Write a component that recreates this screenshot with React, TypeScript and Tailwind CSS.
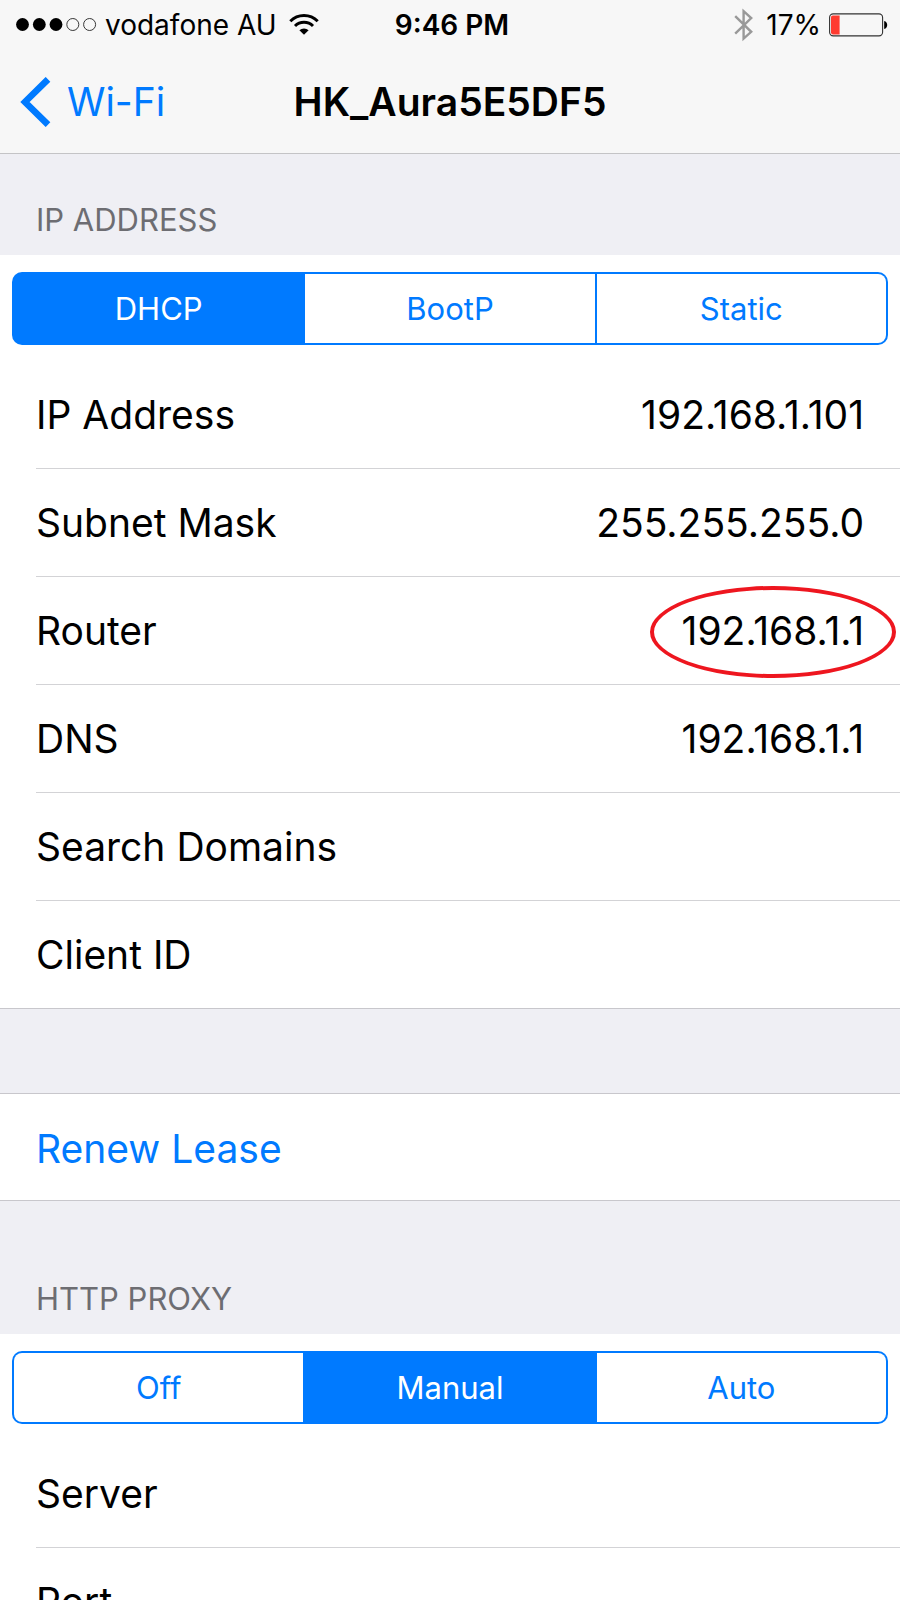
import { useState } from "react";

type SegmentedProps = {
  label: string;
  options: string[];
  value: string;
  onChange: (value: string) => void;
};

type RowProps = {
  label: string;
  value: string;
  circled?: boolean;
};

const LEASE: RowProps[] = [
  { label: "IP Address", value: "192.168.1.101" },
  { label: "Subnet Mask", value: "255.255.255.0" },
  { label: "Router", value: "192.168.1.1", circled: true },
  { label: "DNS", value: "192.168.1.1" },
];

// ── Icons ────────────────────────────────────────────────────────────────
function SignalDots() {
  return (
    <svg width="81" height="14" viewBox="0 0 81 14" aria-label="Signal 3 of 5">
      <circle cx="6.5" cy="6.5" r="6.4" />
      <circle cx="23.3" cy="6.5" r="6.4" />
      <circle cx="40" cy="6.5" r="6.4" />
      <circle cx="56.8" cy="6.5" r="6" fill="none" stroke="#222" strokeWidth="0.9" />
      <circle cx="73.6" cy="6.5" r="6" fill="none" stroke="#222" strokeWidth="0.9" />
    </svg>
  );
}

function WifiIcon() {
  return (
    <svg width="30" height="22" viewBox="0 0 30 22" fill="none" stroke="#000" strokeWidth="3" aria-label="Wi-Fi">
      <path d="M1.3 7.2 A19.4 19.4 0 0 1 28.7 7.2" />
      <path d="M6 12 A12.8 12.8 0 0 1 24 12" />
      <path d="M10.4 16.2 A6.8 6.8 0 0 1 19.6 16.2 L15 20.8 Z" fill="#000" stroke="none" />
    </svg>
  );
}

function BluetoothIcon() {
  return (
    <svg width="20" height="34" viewBox="0 0 20 34" fill="none" stroke="#999" strokeWidth="2.4" aria-label="Bluetooth">
      <path d="M1.2 8.2 L17.2 23.8 L9.6 30.6 V3.2 L17.2 10 L1.2 25.6" />
    </svg>
  );
}

function BatteryIcon() {
  return (
    <svg width="59" height="24" viewBox="0 0 59 24" aria-label="Battery">
      <rect x="0.6" y="0.9" width="53" height="22" rx="3.6" fill="none" stroke="#333" strokeWidth="1.1" />
      <path d="M3.8 2.4 H10.6 V21.4 H3.8 A1.8 1.8 0 0 1 2 19.6 V4.2 A1.8 1.8 0 0 1 3.8 2.4 Z" fill="#ff3b30" />
      <path d="M55.2 8 C59.2 9 59.2 15 55.2 16 Z" />
    </svg>
  );
}

function BackChevron() {
  return (
    <svg width="31" height="50" viewBox="0 0 31 50" fill="none" stroke="#007aff" strokeWidth="6.6">
      <path d="M28 2.3 L5 25 L28 47.7" />
    </svg>
  );
}

// ── Building blocks ──────────────────────────────────────────────────────
function Segmented({ label, options, value, onChange }: SegmentedProps) {
  return (
    <div className="px-3 pt-[17px] pb-4">
      <div
        role="group"
        aria-label={label}
        className="grid h-[73px] grid-cols-3 gap-[2px] rounded-[10px] bg-[#007aff] p-[2px]"
      >
        {options.map((option) => (
          <button
            key={option}
            type="button"
            aria-pressed={option === value}
            onClick={() => onChange(option)}
            className={`text-[31px] leading-10 first:rounded-l-lg last:rounded-r-lg ${
              option === value ? "bg-[#007aff] text-white" : "bg-white text-[#007aff]"
            }`}
          >
            {option}
          </button>
        ))}
      </div>
    </div>
  );
}

function ValueRow({ label, value, circled }: RowProps) {
  return (
    <div className="relative pl-9">
      <div className="flex h-[108px] items-center justify-between border-b border-[#d3d3d6] pr-9">
        <dt>{label}</dt>
        <dd>{value}</dd>
      </div>
      {circled && (
        <span className="absolute top-[9px] right-1 h-[92px] w-[246px] rounded-[50%] border-4 border-[#ee161f]" />
      )}
    </div>
  );
}

function FieldRow({ id, label, last }: { id: string; label: string; last?: boolean }) {
  return (
    <div className={last ? "border-b border-[#c8c7cc] pl-9" : "pl-9"}>
      <div
        className={`flex items-center gap-6 pr-9 ${
          last ? "h-[107px]" : "h-[108px] border-b border-[#d3d3d6]"
        }`}
      >
        <label htmlFor={id} className="shrink-0">
          {label}
        </label>
        <input id={id} type="text" className="min-w-0 flex-1 bg-transparent text-right outline-none" />
      </div>
    </div>
  );
}

function SectionTitle({ children }: { children: string }) {
  return <h2 className="px-9 pb-[15px] text-[31px] leading-10 text-[#6d6d72]">{children}</h2>;
}

export default function App() {
  const [ipMode, setIpMode] = useState("DHCP");
  const [proxyMode, setProxyMode] = useState("Manual");

  return (
    <div className="flex h-screen flex-col overflow-hidden bg-[#efeff4] font-['Inter','Liberation_Sans',sans-serif] text-black">
      <header className="shrink-0 border-b border-[#c4c4c6] bg-[#f7f7f7]">
        <div className="grid h-[50px] grid-cols-[1fr_auto_1fr] items-center pr-3 pl-4 text-[28px] leading-9">
          <div className="flex items-center gap-2">
            <SignalDots />
            <span>vodafone AU</span>
            <span className="pl-1">
              <WifiIcon />
            </span>
          </div>
          <span className="font-semibold">9:46 PM</span>
          <div className="flex items-center justify-end gap-2">
            <span className="pr-1">
              <BluetoothIcon />
            </span>
            <span>17%</span>
            <BatteryIcon />
          </div>
        </div>
        <div className="grid h-[103px] grid-cols-[1fr_auto_1fr] items-center px-5 text-[39px] leading-12">
          <button type="button" className="flex items-center gap-4 text-[#007aff]">
            <BackChevron />
            Wi-Fi
          </button>
          <h1 className="font-semibold">HK_Aura5E5DF5</h1>
        </div>
      </header>

      <main className="min-h-0 flex-1 overflow-y-auto text-[39px] leading-12 [scrollbar-width:none]">
        <section>
          <div className="pt-[46px]">
            <SectionTitle>IP ADDRESS</SectionTitle>
          </div>
          <div className="bg-white">
            <Segmented
              label="IP address mode"
              options={["DHCP", "BootP", "Static"]}
              value={ipMode}
              onChange={setIpMode}
            />
            <dl>
              {LEASE.map((row) => (
                <ValueRow key={row.label} {...row} />
              ))}
            </dl>
            <FieldRow id="search-domains" label="Search Domains" />
            <FieldRow id="client-id" label="Client ID" last />
          </div>
        </section>

        <section className="pt-[84px]">
          <button
            type="button"
            className="block h-[108px] w-full border-y border-[#c8c7cc] bg-white px-9 pt-1 text-left text-[#007aff]"
          >
            Renew Lease
          </button>
        </section>

        <section>
          <div className="pt-[78px]">
            <SectionTitle>HTTP PROXY</SectionTitle>
          </div>
          <div className="bg-white">
            <Segmented
              label="HTTP proxy mode"
              options={["Off", "Manual", "Auto"]}
              value={proxyMode}
              onChange={setProxyMode}
            />
            <FieldRow id="proxy-server" label="Server" />
            <FieldRow id="proxy-port" label="Port" last />
          </div>
        </section>
      </main>
    </div>
  );
}
